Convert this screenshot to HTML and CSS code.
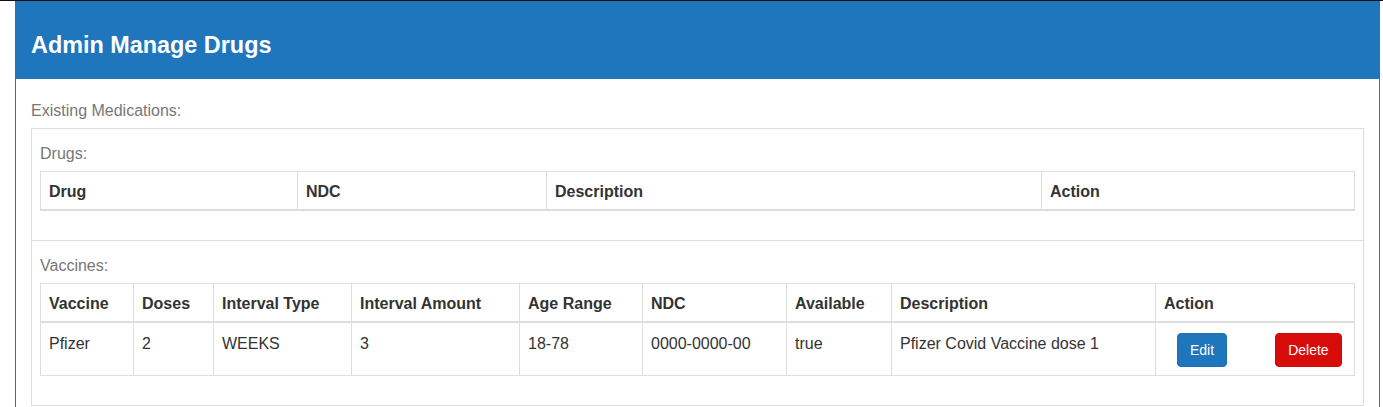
FILE: index.html
```html
<!DOCTYPE html>
<html>
<head>
<meta charset="utf-8">
<title>Admin Manage Drugs</title>
<link rel="stylesheet" href="styles.css">
</head>
<body>
<div class="topline"></div>
<div class="panel">
  <div class="panel-heading">
    <h3 class="panel-title">Admin Manage Drugs</h3>
  </div>
  <div class="panel-body">
    <div class="label">Existing Medications:</div>
    <div class="box">
      <div class="section">
        <div class="label">Drugs:</div>
        <table class="grid">
          <colgroup>
            <col class="c-drug"><col class="c-dndc"><col class="c-ddesc"><col class="c-daction">
          </colgroup>
          <thead>
            <tr><th>Drug</th><th>NDC</th><th>Description</th><th>Action</th></tr>
          </thead>
          <tbody></tbody>
        </table>
      </div>
      <div class="section">
        <div class="label">Vaccines:</div>
        <table class="grid">
          <colgroup>
            <col class="c-vac"><col class="c-doses"><col class="c-itype"><col class="c-iamt"><col class="c-age"><col class="c-ndc"><col class="c-avail"><col class="c-desc"><col class="c-action">
          </colgroup>
          <thead>
            <tr><th>Vaccine</th><th>Doses</th><th>Interval Type</th><th>Interval Amount</th><th>Age Range</th><th>NDC</th><th>Available</th><th>Description</th><th>Action</th></tr>
          </thead>
          <tbody>
            <tr>
              <td>Pfizer</td><td>2</td><td>WEEKS</td><td>3</td><td>18-78</td><td>0000-0000-00</td><td>true</td><td>Pfizer Covid Vaccine dose 1</td>
              <td><button class="btn btn-edit">Edit</button><button class="btn btn-delete">Delete</button></td>
            </tr>
          </tbody>
        </table>
      </div>
    </div>
  </div>
</div>
</body>
</html>
```

FILE: styles.css
```css
html, body {
  margin: 0;
  padding: 0;
  background: #ffffff;
}
body {
  font-family: "Liberation Sans", Arial, Helvetica, sans-serif;
  font-size: 16px;
  line-height: 20px;
  color: #333333;
}
.topline {
  height: 1px;
  background: #111111;
}
.panel {
  margin: 0 3px 0 15px;
  border: 1px solid #1f76bd;
  border-top: none;
  background: #ffffff;
}
.panel-heading {
  background: #1f76bd;
  padding: 30px 15px 20px;
}
.panel-title {
  margin: 0;
  font-size: 23.4px;
  line-height: 28px;
  font-weight: bold;
  color: #ffffff;
}
.panel-body {
  padding: 22px 15px 20px;
}
.label {
  color: #777777;
  margin-bottom: 7px;
}
.box {
  border: 1px solid #dddddd;
}
.section {
  padding: 15px 8px 8px;
}
.section + .section {
  border-top: 1px solid #dddddd;
}
.grid {
  width: 100%;
  table-layout: fixed;
  border-collapse: collapse;
  margin-bottom: 21px;
  border: 1px solid #dddddd;
}
.grid th, .grid td {
  border: 1px solid #dddddd;
  text-align: left;
  vertical-align: top;
  white-space: nowrap;
}
.grid th {
  font-weight: bold;
  padding: 10px 8px 7px;
  line-height: 20px;
  border-bottom: 2px solid #dddddd;
}
.grid td {
  padding: 10px 8px 8px;
  line-height: 22px;
}
.c-drug { width: 257px; }
.c-dndc { width: 249px; }
.c-ddesc { width: 495px; }
.c-daction { width: 313px; }
.c-vac { width: 93px; }
.c-doses { width: 80px; }
.c-itype { width: 138px; }
.c-iamt { width: 168px; }
.c-age { width: 123px; }
.c-ndc { width: 144px; }
.c-avail { width: 105px; }
.c-desc { width: 264px; }
.c-action { width: 199px; }
.btn {
  font-family: "Liberation Sans", Arial, Helvetica, sans-serif;
  font-size: 14px;
  line-height: 20px;
  padding: 6px 12px;
  border-radius: 4px;
  color: #ffffff;
  border: 1px solid transparent;
  vertical-align: top;
  cursor: pointer;
}
.btn-edit {
  background: #1f76bd;
  border-color: #1d6fb2;
  margin-left: 13px;
}
.btn-delete {
  background: #d80b0b;
  border-color: #cc0a0a;
  margin-left: 48px;
}
```
